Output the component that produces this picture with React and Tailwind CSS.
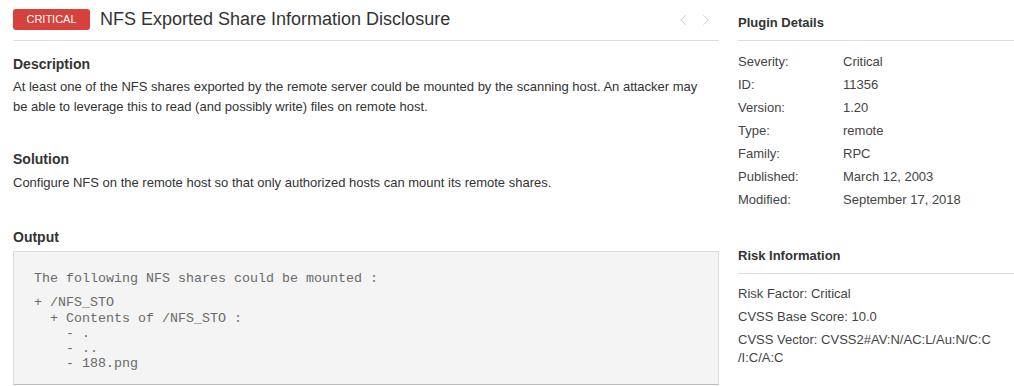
import { ChevronLeft, ChevronRight } from "lucide-react";

const details = [
  ["Severity:", "Critical"],
  ["ID:", "11356"],
  ["Version:", "1.20"],
  ["Type:", "remote"],
  ["Family:", "RPC"],
  ["Published:", "March 12, 2003"],
  ["Modified:", "September 17, 2018"],
];

function Heading({ children, className = "" }) {
  return (
    <h3 className={`text-[14px] leading-[20px] font-bold text-[#333] ${className}`}>{children}</h3>
  );
}

function SideHeading({ children, className = "" }) {
  return (
    <h4 className={`text-[13px] leading-[20px] font-bold text-[#333] pb-[7px] border-b border-[#ddd] ${className}`}>
      {children}
    </h4>
  );
}

export default function App() {
  return (
    <div className="w-[1014px] h-[386px] overflow-hidden bg-white flex font-['Liberation_Sans',Arial,sans-serif] text-[#333]">
      {/* main column */}
      <div className="w-[706px] ml-[13px] shrink-0">
        <div className="flex items-center pt-[9px] pb-[10px] border-b border-[#ddd]">
          <span className="w-[77px] h-[21px] rounded-[3px] bg-[#d7413b] text-white text-[11px] flex items-center justify-center">
            CRITICAL
          </span>
          <h1 className="ml-[10px] text-[18px] leading-[21px] text-[#333]">
            NFS Exported Share Information Disclosure
          </h1>
          <div className="ml-auto mr-[4px] flex items-center gap-[5px] text-[#bdbdbd]">
            <ChevronLeft size={18} strokeWidth={1.1} />
            <ChevronRight size={18} strokeWidth={1.1} />
          </div>
        </div>

        <Heading className="mt-[13px] mb-[3px]">Description</Heading>
        <p className="text-[13px] leading-[20px] text-[#333] max-w-[700px]">
          At least one of the NFS shares exported by the remote server could be mounted by the scanning host. An attacker may be able to leverage this to read (and possibly write) files on remote host.
        </p>

        <Heading className="mt-[32px] mb-[4px]">Solution</Heading>
        <p className="text-[13px] leading-[20px] text-[#333]">
          Configure NFS on the remote host so that only authorized hosts can mount its remote shares.
        </p>

        <Heading className="mt-[34px] mb-[4px]">Output</Heading>
        <div className="bg-[#f4f4f4] border border-[#ddd] border-b-[#bbb] border-b-dotted pt-[19px] pb-[12px] px-[20px] font-['Liberation_Mono','Courier_New',monospace] text-[13.33px] leading-[15.3px] text-[#6a6a6a] whitespace-pre">
          <div className="mb-[9px]">The following NFS shares could be mounted :</div>
          <div>{"+ /NFS_STO"}</div>
          <div>{"  + Contents of /NFS_STO :"}</div>
          <div>{"    - ."}</div>
          <div>{"    - .."}</div>
          <div>{"    - 188.png"}</div>
        </div>
      </div>

      {/* side column */}
      <div className="ml-[19px] flex-1 pt-[13px]">
        <SideHeading>Plugin Details</SideHeading>
        <div className="mt-[12px] text-[13px] leading-[18px] text-[#444]">
          {details.map(([k, v]) => (
            <div key={k} className="flex mb-[5px]">
              <span className="w-[105px] shrink-0">{k}</span>
              <span>{v}</span>
            </div>
          ))}
        </div>

        <SideHeading className="mt-[37px]">Risk Information</SideHeading>
        <div className="mt-[11px] text-[13px] leading-[18px] text-[#444]">
          <div className="mb-[5px]">Risk Factor: Critical</div>
          <div className="mb-[5px]">CVSS Base Score: 10.0</div>
          <div>
            CVSS Vector: CVSS2#AV:N/AC:L/Au:N/C:C
            <br />
            /I:C/A:C
          </div>
        </div>
      </div>
    </div>
  );
}
